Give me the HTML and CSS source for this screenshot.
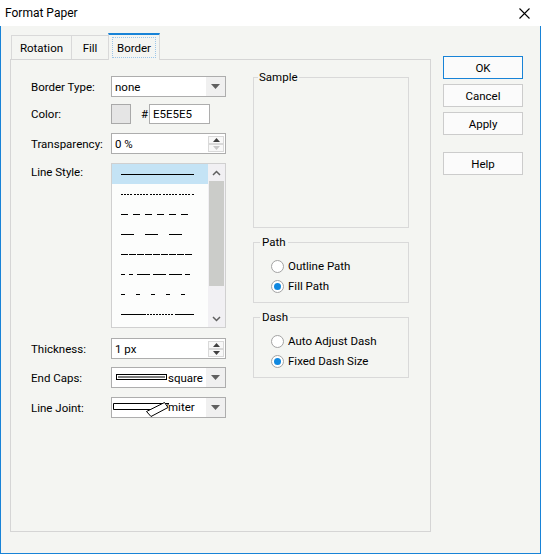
FILE: index.html
```html
<!DOCTYPE html>
<html>
<head>
<meta charset="utf-8">
<title>Format Paper</title>
<link rel="stylesheet" href="styles.css">
</head>
<body>
<div class="window">
  <div class="titlebar">
    <span class="title">Format Paper</span>
    <svg class="close" width="11" height="11" viewBox="0 0 11 11"><path d="M0.5 0.5 L10.5 10.5 M10.5 0.5 L0.5 10.5" stroke="#000" stroke-width="1.1" fill="none"/></svg>
  </div>
  <div class="client">
    <div class="tabarea">
      <div class="tabstrip">
        <div class="tab tab-rot">Rotation</div>
        <div class="tab tab-fill">Fill</div>
        <div class="tab tab-border active"><span class="focus">Border</span></div>
      </div>
      <div class="panel">
        <div class="leftcol">
          <div class="row r-type">
            <span class="label">Border Type:</span>
            <div class="combo"><span class="val">none</span><span class="drop"><svg width="9" height="5" viewBox="0 0 9 5"><path d="M0 0 H9 L4.5 5 Z" fill="#606060"/></svg></span></div>
          </div>
          <div class="row r-color">
            <span class="label">Color:</span>
            <span class="swatch"></span>
            <span class="hash">#</span>
            <span class="hexfield">E5E5E5</span>
          </div>
          <div class="row r-trans">
            <span class="label">Transparency:</span>
            <div class="spin"><span class="val">0 %</span>
              <span class="spinbtns">
                <span class="sbtn"><svg width="7" height="4" viewBox="0 0 7 4"><path d="M0 4 H7 L3.5 0 Z" fill="#404040"/></svg></span>
                <span class="sbtn"><svg width="7" height="4" viewBox="0 0 7 4"><path d="M0 0 H7 L3.5 4 Z" fill="#c8c8c8"/></svg></span>
              </span>
            </div>
          </div>
          <div class="row r-list">
            <span class="label label-top">Line Style:</span>
            <div class="list">
              <div class="items">
                <div class="item selected"><svg width="96" height="20"><line x1="9" y1="10.5" x2="82" y2="10.5"/></svg></div>
                <div class="item"><svg width="96" height="20"><line x1="9" y1="10.5" x2="82" y2="10.5" stroke-dasharray="2 1 2 1 2 1 2 2 2 1 2 1 2 1 2 1 2 2"/></svg></div>
                <div class="item"><svg width="96" height="20"><line x1="9" y1="10.5" x2="76" y2="10.5" stroke-dasharray="7 5"/></svg></div>
                <div class="item"><svg width="96" height="20"><line x1="9" y1="10.5" x2="70" y2="10.5" stroke-dasharray="13 11"/></svg></div>
                <div class="item"><svg width="96" height="20"><line x1="9" y1="10.5" x2="80" y2="10.5" stroke-dasharray="7 1"/></svg></div>
                <div class="item"><svg width="96" height="20"><path d="M9 10.5 H13 M17 10.5 H21 M25 10.5 H38 M41 10.5 H54 M57 10.5 H70 M73 10.5 H78"/></svg></div>
                <div class="item"><svg width="96" height="20"><line x1="9" y1="10.5" x2="73" y2="10.5" stroke-dasharray="4 11"/></svg></div>
                <div class="item"><svg width="96" height="20"><path d="M9 10.5 H34 M63 10.5 H82"/><line x1="35" y1="10.5" x2="62" y2="10.5" stroke-dasharray="2 1"/></svg></div>
              </div>
              <div class="scrollbar">
                <span class="sb-arrow"><svg width="9" height="6" viewBox="0 0 9 6"><path d="M1 5 L4.5 1.5 L8 5" stroke="#606060" stroke-width="1.5" fill="none"/></svg></span>
                <span class="thumb"></span>
                <span class="sb-space"></span>
                <span class="sb-arrow"><svg width="9" height="6" viewBox="0 0 9 6"><path d="M1 1 L4.5 4.5 L8 1" stroke="#606060" stroke-width="1.5" fill="none"/></svg></span>
              </div>
            </div>
          </div>
          <div class="row r-thick">
            <span class="label">Thickness:</span>
            <div class="spin"><span class="val">1 px</span>
              <span class="spinbtns">
                <span class="sbtn"><svg width="7" height="4" viewBox="0 0 7 4"><path d="M0 4 H7 L3.5 0 Z" fill="#404040"/></svg></span>
                <span class="sbtn"><svg width="7" height="4" viewBox="0 0 7 4"><path d="M0 0 H7 L3.5 4 Z" fill="#404040"/></svg></span>
              </span>
            </div>
          </div>
          <div class="row r-caps">
            <span class="label">End Caps:</span>
            <div class="combo"><span class="val val-icon"><svg class="capicon" width="52" height="7" viewBox="0 0 52 7"><rect x="0.5" y="0.5" width="50" height="5" fill="#fff" stroke="#000"/><line x1="2" y1="3" x2="49" y2="3" stroke="#000"/></svg>square</span><span class="drop"><svg width="9" height="5" viewBox="0 0 9 5"><path d="M0 0 H9 L4.5 5 Z" fill="#606060"/></svg></span></div>
          </div>
          <div class="row r-joint">
            <span class="label">Line Joint:</span>
            <div class="combo"><span class="val val-joint"><svg class="jointicon" width="56" height="19" viewBox="0 0 56 19"><path d="M0.5 5.5 H56 L50 11.5 H0.5 Z" fill="#fff" stroke="#000"/><path d="M33.5 13.5 L51.5 4.5 L55 9.5 L38 18.5 Z" fill="#fff" stroke="#000"/></svg>miter</span><span class="drop"><svg width="9" height="5" viewBox="0 0 9 5"><path d="M0 0 H9 L4.5 5 Z" fill="#606060"/></svg></span></div>
          </div>
        </div>
        <div class="rightcol">
          <div class="group g-sample"><span class="gtitle gtitle-sample">Sample</span></div>
          <div class="group g-radio"><span class="gtitle">Path</span>
            <div class="radio"><span class="circle"></span><span>Outline Path</span></div>
            <div class="radio"><span class="circle checked"></span><span>Fill Path</span></div>
          </div>
          <div class="group g-radio"><span class="gtitle">Dash</span>
            <div class="radio"><span class="circle"></span><span>Auto Adjust Dash</span></div>
            <div class="radio"><span class="circle checked"></span><span>Fixed Dash Size</span></div>
          </div>
        </div>
      </div>
    </div>
    <div class="buttons">
      <div class="btn default">OK</div>
      <div class="btn">Cancel</div>
      <div class="btn">Apply</div>
      <div class="btn help">Help</div>
    </div>
  </div>
</div>
</body>
</html>
```
FILE: styles.css
```css
* { box-sizing: border-box; }
body {
  margin: 0;
  font-family: Roboto, "Noto Sans", sans-serif;
  font-size: 11.5px;
  color: #000;
  background: #fff;
}
.window {
  width: 541px;
  height: 554px;
  display: flex;
  flex-direction: column;
  background: #f4f5f2;
}
.titlebar {
  height: 26px;
  background: #fff;
  display: flex;
  align-items: center;
  justify-content: space-between;
  padding: 0 11px 0 5px;
  flex: none;
}
.title { font-size: 12px; }
.close { display: block; }
.client {
  flex: 1;
  border: 1px solid #1883d7;
  border-top: none;
  display: flex;
  padding-left: 9px;
}
.tabarea {
  width: 421px;
  padding-top: 7px;
  display: flex;
  flex-direction: column;
}
.tabstrip {
  height: 26px;
  display: flex;
  align-items: flex-end;
  padding-left: 1px;
  position: relative;
  z-index: 1;
}
.tab {
  height: 24px;
  border: 1px solid #d9d9d9;
  border-bottom: none;
  display: flex;
  align-items: center;
  justify-content: center;
  margin-right: -1px;
  background: #f4f5f2;
  padding-top: 1px;
}
.tab-rot { width: 61px; }
.tab-fill { width: 38px; }
.tab-border { width: 52px; }
.tab.active {
  height: 27px;
  margin-bottom: -1px;
  border-top: 2px solid #1883d7;
  padding-top: 0;
}
.focus {
  width: 44px;
  height: 21px;
  border: 1px dotted #9cc6ea;
  display: flex;
  align-items: center;
  justify-content: center;
}
.panel {
  height: 473px;
  border: 1px solid #d5d5d5;
  display: flex;
  padding: 16px 0 0 20px;
}
.leftcol {
  width: 195px;
  display: flex;
  flex-direction: column;
}
.row { display: flex; align-items: center; }
.label { width: 80px; flex: none; }
.label-top { align-self: flex-start; padding-top: 2px; }
.r-type { height: 21px; }
.r-color { height: 20px; margin-top: 7px; }
.r-trans { height: 21px; margin-top: 9px; }
.r-list { margin-top: 9px; align-items: flex-start; }
.r-thick { height: 21px; margin-top: 10px; }
.r-caps { height: 21px; margin-top: 8px; }
.r-joint { height: 21px; margin-top: 9px; }
.combo, .spin {
  width: 115px;
  height: 21px;
  border: 1px solid #adadad;
  background: #fff;
  display: flex;
  align-items: stretch;
}
.val {
  flex: 1;
  display: flex;
  align-items: center;
  padding-left: 3px;
}
.val-icon { padding-left: 1px; }
.val-joint { padding-left: 1px; align-items: flex-start; line-height: 19px; }
.capicon { margin: 0 0 0 3px; display: block; }
.jointicon { display: block; margin-right: -1px; }
.drop {
  width: 19px;
  background: #f0f0f0;
  display: flex;
  align-items: center;
  justify-content: center;
}
.drop svg { display: block; }
.swatch {
  width: 20px;
  height: 20px;
  border: 1px solid #a9a9a9;
  background: #e5e5e5;
  margin-right: 10px;
}
.hash { width: 8px; }
.hexfield {
  width: 61px;
  height: 20px;
  border: 1px solid #adadad;
  background: #fff;
  display: flex;
  align-items: center;
  padding-left: 3px;
}
.spinbtns {
  width: 17px;
  display: flex;
  flex-direction: column;
  justify-content: center;
  padding: 1px 1px 1px 0;
}
.sbtn {
  height: 8px;
  border: 1px solid #d9d9d9;
  background: #f8f8f8;
  display: flex;
  align-items: center;
  justify-content: center;
}
.sbtn svg { display: block; }
.list {
  width: 115px;
  height: 165px;
  border: 1px solid #d0d0d0;
  background: #fcfdfc;
  display: flex;
}
.items {
  width: 96px;
  overflow: hidden;
}
.item { height: 20px; }
.item svg { display: block; }
.item line, .item path { stroke: #000; stroke-width: 1; fill: none; shape-rendering: crispEdges; }
.item.selected { background: #c4e3f5; }
.scrollbar {
  width: 17px;
  background: #f1f0f3;
  display: flex;
  flex-direction: column;
}
.sb-arrow {
  height: 17px;
  display: flex;
  align-items: center;
  justify-content: center;
}
.sb-arrow svg { display: block; }
.thumb {
  height: 105px;
  margin: 0 1px;
  background: #cbccc9;
}
.sb-space { flex: 1; }
.rightcol {
  width: 156px;
  margin-left: 27px;
  padding-top: 1px;
  display: flex;
  flex-direction: column;
}
.group {
  position: relative;
  border: 1px solid #d9d9d9;
}
.g-sample { height: 151px; }
.g-radio {
  height: 61px;
  margin-top: 14px;
  padding: 13px 0 0 17px;
}
.gtitle {
  position: absolute;
  top: -8px;
  left: 6px;
  line-height: 15px;
  padding: 0 2px;
  background: #f4f5f2;
}
.gtitle-sample { left: 4px; padding: 0 1px; }
.radio {
  height: 20px;
  display: flex;
  align-items: center;
}
.circle {
  width: 13px;
  height: 13px;
  border: 1px solid #a3a3a3;
  border-radius: 50%;
  background: #fff;
  margin-right: 4px;
  display: flex;
  align-items: center;
  justify-content: center;
}
.circle.checked::after {
  content: "";
  width: 7px;
  height: 7px;
  border-radius: 50%;
  background: #1088e0;
}
.buttons {
  margin-left: 12px;
  padding-top: 30px;
  display: flex;
  flex-direction: column;
}
.btn {
  width: 80px;
  height: 23px;
  border: 1px solid #cccccc;
  background: #fbfbfb;
  display: flex;
  align-items: center;
  justify-content: center;
  margin-bottom: 5px;
}
.btn.default { border-color: #1883d7; }
.btn.help { margin-top: 12px; }
```
